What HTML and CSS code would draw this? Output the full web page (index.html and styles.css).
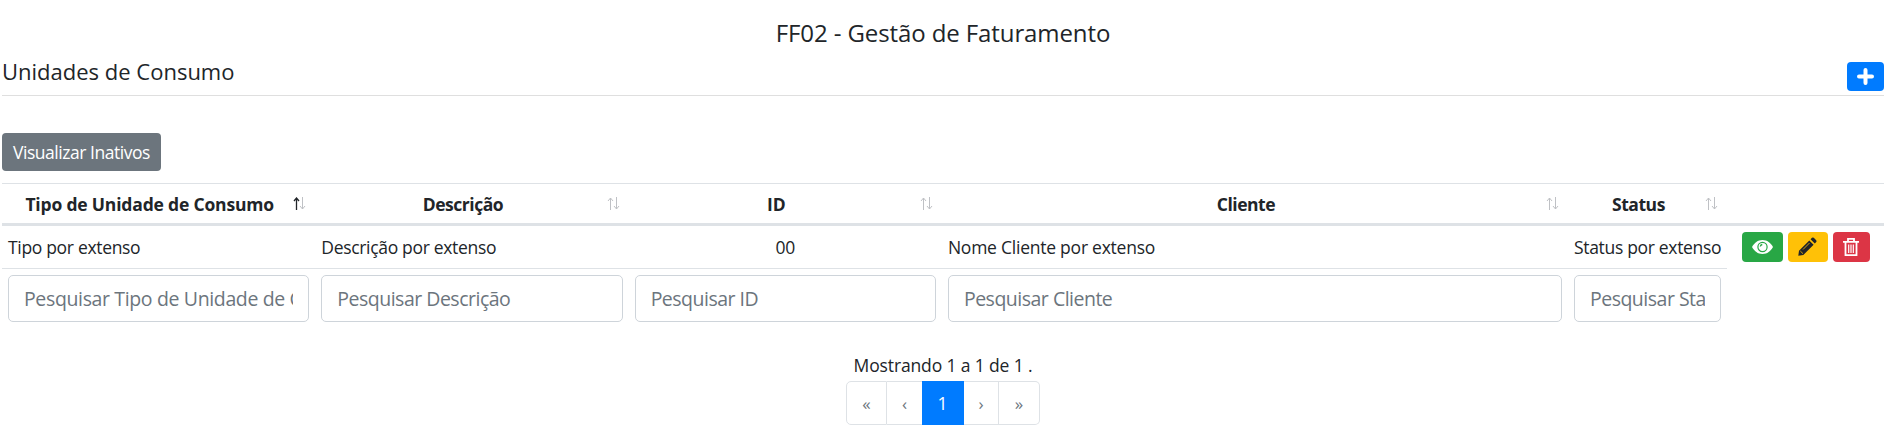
FILE: index.html
```html
<!DOCTYPE html>
<html lang="pt-BR">
<head>
<meta charset="utf-8">
<title>FF02 - Gestão de Faturamento</title>
<link rel="stylesheet" href="styles.css">
</head>
<body>
<header class="page-title"><h1>FF02 - Gestão de Faturamento</h1></header>
<section class="section-head">
  <h2>Unidades de Consumo</h2>
  <button class="btn btn-add" aria-label="Adicionar"><svg width="17" height="17" viewBox="0 0 17 17"><path d="M8.500 2v13M2 8.500h13" stroke="#fff" stroke-width="4" stroke-linecap="round"/></svg></button>
</section>
<button class="btn btn-inactive"><span>Visualizar Inativos</span></button>
<table class="units">
  <colgroup><col class="c1"><col class="c2"><col class="c3"><col class="c4"><col class="c5"><col class="c6"></colgroup>
  <thead>
    <tr>
      <th class="asc"><div class="th"><span class="label">Tipo de Unidade de Consumo</span><svg class="sort" viewBox="0 0 13 13"><path class="up" d="M3.500 13V1M1 4l2.500-3L6 4"/><path class="down" d="M9.500 0v12M7 9l2.500 3L12 9"/></svg></div></th>
      <th><div class="th"><span class="label tight">Descrição</span><svg class="sort" viewBox="0 0 13 13"><path class="up" d="M3.500 13V1M1 4l2.500-3L6 4"/><path class="down" d="M9.500 0v12M7 9l2.500 3L12 9"/></svg></div></th>
      <th><div class="th"><span class="label">ID</span><svg class="sort" viewBox="0 0 13 13"><path class="up" d="M3.500 13V1M1 4l2.500-3L6 4"/><path class="down" d="M9.500 0v12M7 9l2.500 3L12 9"/></svg></div></th>
      <th><div class="th"><span class="label tight">Cliente</span><svg class="sort" viewBox="0 0 13 13"><path class="up" d="M3.500 13V1M1 4l2.500-3L6 4"/><path class="down" d="M9.500 0v12M7 9l2.500 3L12 9"/></svg></div></th>
      <th><div class="th"><span class="label tight">Status</span><svg class="sort" viewBox="0 0 13 13"><path class="up" d="M3.500 13V1M1 4l2.500-3L6 4"/><path class="down" d="M9.500 0v12M7 9l2.500 3L12 9"/></svg></div></th>
      <th></th>
    </tr>
  </thead>
  <tbody>
    <tr class="data">
      <td>Tipo por extenso</td>
      <td>Descrição por extenso</td>
      <td class="center">00</td>
      <td class="client">Nome Cliente por extenso</td>
      <td>Status por extenso</td>
      <td class="actions"><div class="action-row">
        <button class="btn view" aria-label="Visualizar"><svg width="21" height="14" viewBox="0 0 21 14"><path fill="#fff" d="M10.500 0C5.800 0 2.300 2.800 0 7c2.300 4.200 5.800 7 10.500 7S18.700 11.200 21 7C18.700 2.800 15.200 0 10.500 0z"/><circle cx="10.500" cy="7" r="4.600" fill="none" stroke="#28a745" stroke-width="1.200"/><path d="M8.300 6.500a2.300 2.300 0 0 1 2-2" fill="none" stroke="#28a745" stroke-width="1.300"/></svg></button>
        <button class="btn edit" aria-label="Editar"><svg width="19" height="19" viewBox="0 0 19 19"><path fill="#212529" d="M11.300 3.400 15.600 7.700 5.300 18 .3 18.700 1 13.700zM12.500 2.200 14 .8q.9-.8 1.800 0l2.400 2.400q.8.900 0 1.800L16.800 6.500z"/><path d="M2.300 14 5 16.700M5 12.500 11.500 6" stroke="#ffc107" stroke-width=".8" fill="none"/></svg></button>
        <button class="btn remove" aria-label="Excluir"><svg width="16" height="18" viewBox="0 0 16 18" fill="none" stroke="#fff"><path stroke-width="1.800" d="M0 3.900h16M5 3.500V.9h6v2.600M2.500 4v13.100h11V4"/><path stroke-width="1.200" d="M5.700 6.500v8.500M8 6.500v8.500M10.300 6.500v8.500"/></svg></button>
      </div></td>
    </tr>
    <tr class="filters">
      <td><input class="loose" placeholder="Pesquisar Tipo de Unidade de Consumo"></td>
      <td><input placeholder="Pesquisar Descrição"></td>
      <td><input placeholder="Pesquisar ID"></td>
      <td><input placeholder="Pesquisar Cliente"></td>
      <td><input placeholder="Pesquisar Status"></td>
      <td class="blank"></td>
    </tr>
  </tbody>
</table>
<footer class="pager">
  <p>Mostrando 1 a 1 de 1 .</p>
  <ul><li class="wide first">«</li><li class="prev">‹</li><li class="active">1</li><li class="next">›</li><li class="wide last">»</li></ul>
</footer>
</body>
</html>
```

FILE: styles.css
```css
* { box-sizing: border-box; }
body { margin: 0; padding: 0 4px 0 2px; background: #fff; color: #212529; font: 17.5px/26px "Open Sans", "Noto Sans", sans-serif; }
h1, h2, p, ul { margin: 0; padding: 0; font-weight: 400; }
button, input { font: inherit; }
.page-title { height: 58px; padding-top: 17px; text-align: center; }
.page-title h1 { font-size: 24px; line-height: 32px; letter-spacing: -0.1px; }
.section-head { display: flex; justify-content: space-between; height: 38px; border-bottom: 1px solid #dfdfdf; }
.section-head h2 { font-size: 22px; line-height: 26px; }
.btn { display: flex; align-items: center; justify-content: center; padding: 0; border: 0; border-radius: 4px; color: #fff; }
.btn-add { width: 37px; height: 29px; margin-top: 4px; background: #007bff; }
.btn-inactive { width: 159px; height: 38px; margin: 37px 0 12px; background: #6c757d; letter-spacing: -0.46px; }
.units { width: 1882px; table-layout: fixed; border-collapse: separate; border-spacing: 0; }
.c1, .c2, .c3 { width: 313.3px; }
.c4 { width: 626px; }
.c5 { width: 159px; }
.c6 { width: 157px; }
th { height: 43px; padding: 0 9px 0 4px; border-top: 1px solid #dee2e6; border-bottom: 3px solid #dee2e6; }
.th { display: flex; align-items: center; }
.label { flex: 1; text-align: center; white-space: nowrap; letter-spacing: -0.18px; }
.tight { letter-spacing: -0.46px; }
.sort { width: 13px; height: 13px; flex: none; fill: none; stroke: #bfc1c5; stroke-width: 1; }
.asc .up { stroke: #212529; stroke-width: 1.300; }
.data td { height: 43px; padding: 0 6px; border-bottom: 1px solid #dee2e6; white-space: nowrap; letter-spacing: -0.32px; }
.data .client { letter-spacing: -0.24px; }
.data .actions { border: 0; padding: 0 0 2px 15px; }
.action-row { display: flex; gap: 5px; }
.view { width: 41px; height: 30px; background: #28a745; }
.edit { width: 40px; height: 30px; background: #ffc107; }
.remove { width: 37px; height: 30px; background: #dc3545; }
.data .center { text-align: center; }
.filters td { padding: 6px 6px 0; }
.filters input { display: block; width: 100%; height: 47px; padding: 0 15px; border: 1px solid #ced4da; border-radius: 5px; font-size: 19.5px; letter-spacing: -0.5px; }
.filters .loose { letter-spacing: -0.36px; }
.filters input::placeholder { color: #6c757d; opacity: 1; }
.pager { display: flex; flex-direction: column; align-items: center; padding-top: 30px; }
.pager p { height: 29px; letter-spacing: -0.14px; }
.pager ul { display: flex; list-style: none; }
.pager li { width: 35px; height: 44px; line-height: 43px; text-align: center; border: 1px solid #dee2e6; border-left: 0; color: #6c757d; font-size: 17px; }
.pager .active { width: 42px; background: #007bff; border-color: #007bff; color: #fff; font-size: 17.5px; }
.pager .prev { border-right: 0; }
.pager .wide { width: 41px; }
.pager .first { border-left: 1px solid #dee2e6; border-radius: 5px 0 0 5px; }
.pager .last { border-radius: 0 5px 5px 0; }
```
